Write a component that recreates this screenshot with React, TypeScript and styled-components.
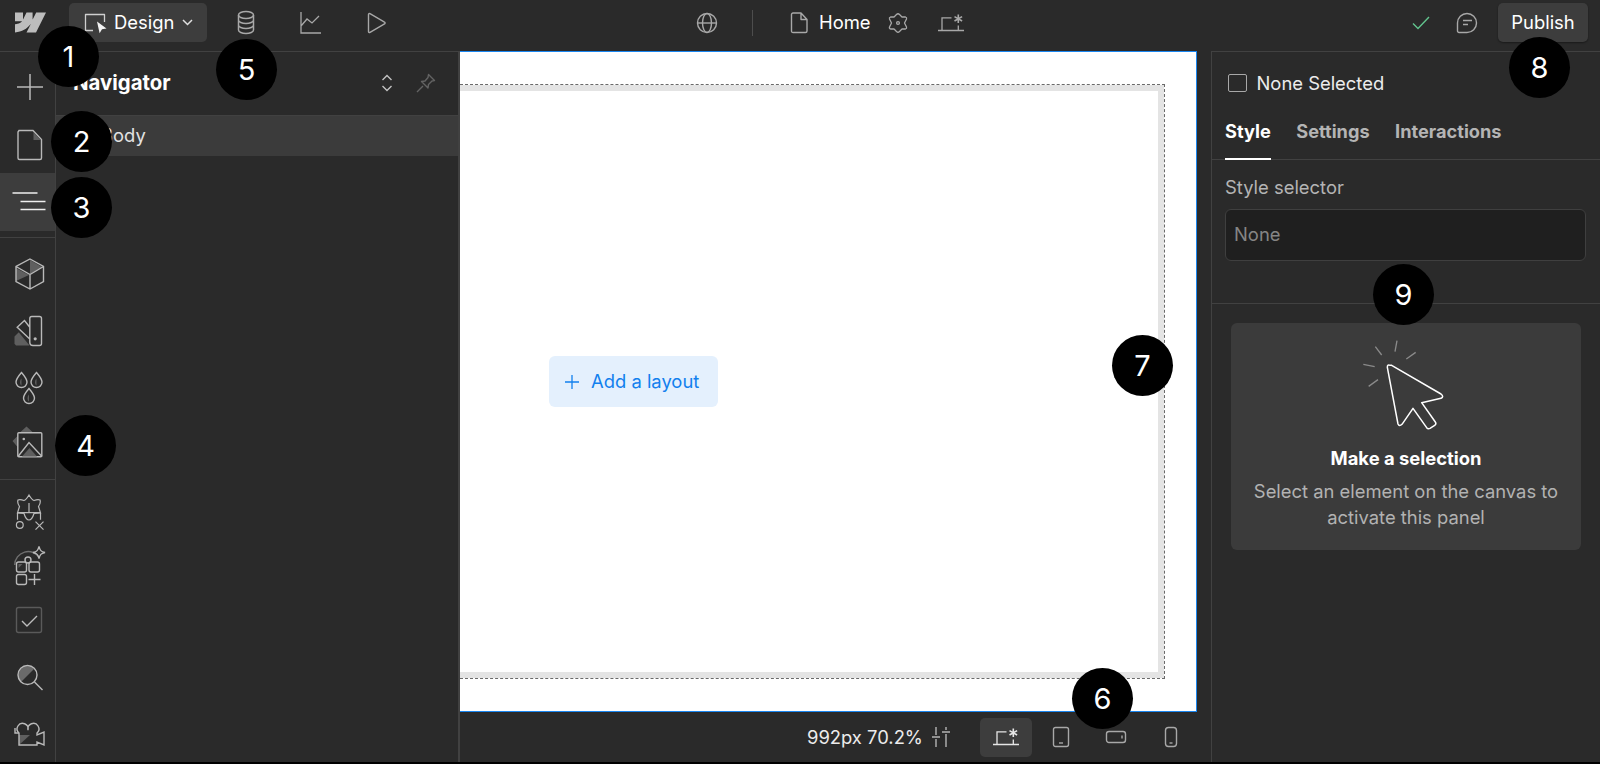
import React from "react";
import styled, { createGlobalStyle } from "styled-components";

const Global = createGlobalStyle`
  html, body { margin: 0; padding: 0; background: #000; height: 100%; overflow: hidden; }
  body { font-family: Inter, "Noto Sans", sans-serif; color: #fff; }
  svg { display: block; flex: none; overflow: visible; }
`;

const Shell = styled.div`
  position: relative;
  width: 1600px;
  height: 762px;
  background: #2a2a2a;
  display: flex;
  flex-direction: column;
  overflow: hidden;
  font-size: 18.4px;
`;

const TopBar = styled.header`
  height: 51px;
  flex: none;
  display: grid;
  grid-template-columns: 696px auto 1fr;
  align-items: center;
  box-sizing: border-box;
  padding-bottom: 6px;
  padding-right: 12px;
`;
const TopLeft = styled.div`
  display: flex;
  align-items: center;
`;
const LogoCell = styled.div`
  width: 69px;
  display: flex;
  padding-left: 15px;
  box-sizing: border-box;
`;
const ModeButton = styled.div`
  width: 138px;
  height: 39px;
  border-radius: 5px;
  background: #3d3d3d;
  display: flex;
  align-items: center;
  box-sizing: border-box;
  padding-left: 15px;
  gap: 6px;
`;
const ModeLabel = styled.span`
  margin-bottom: 2px;
`;
const ChevronSlot = styled.span`
  margin-left: 2px;
  display: flex;
`;
const ModeTabs = styled.div`
  display: flex;
  margin-left: 22px;
  gap: 31px;
`;
const TopCenter = styled.div`
  display: flex;
  align-items: center;
`;
const Spacer = styled.span<{ $w: number }>`
  width: ${(p) => p.$w}px;
  flex: none;
`;
const VRule = styled.div`
  width: 1px;
  height: 26px;
  background: #4d4d4d;
  margin: 0 37px 0 34px;
`;
const PageName = styled.span`
  margin: 0 16px 2px 11px;
`;
const TopRight = styled.div`
  display: flex;
  align-items: center;
  justify-content: flex-end;
`;
const PublishButton = styled.div`
  width: 90px;
  height: 39px;
  box-sizing: border-box;
  padding-bottom: 2px;
  border-radius: 5px;
  background: #3d3d3d;
  box-shadow: 0 1px 2px rgba(0, 0, 0, 0.4);
  display: flex;
  align-items: center;
  justify-content: center;
  margin-left: 20px;
`;
const Main = styled.div`
  flex: 1;
  min-height: 0;
  display: flex;
`;
const Sidebar = styled.nav`
  width: 56px;
  flex: none;
  box-sizing: border-box;
  border-right: 1px solid #414141;
  border-top: 1px solid #414141;
  display: flex;
  flex-direction: column;
`;
const SideGroup = styled.div<{ $pad: string; $last?: boolean; $grow?: boolean }>`
  padding: ${(p) => p.$pad};
  border-bottom: ${(p) => (p.$last ? "none" : "1px solid #414141")};
  flex: ${(p) => (p.$grow ? "1" : "none")};
  display: flex;
  flex-direction: column;
`;
const SideItem = styled.div<{ $active?: boolean; $h?: number }>`
  height: ${(p) => p.$h ?? 57}px;
  display: flex;
  align-items: center;
  justify-content: center;
  padding-left: 2px;
  background: ${(p) => (p.$active ? "#3d3d3d" : "transparent")};
`;
const Navigator = styled.section`
  width: 404px;
  flex: none;
  box-sizing: border-box;
  border-right: 2px solid #414141;
  border-top: 1px solid #414141;
  display: flex;
  flex-direction: column;
`;
const NavHead = styled.div`
  height: 64px;
  box-sizing: border-box;
  flex: none;
  display: flex;
  align-items: center;
  padding: 0 22px 2px 17px;
  border-bottom: 1px solid #414141;
`;
const NavTitle = styled.h2`
  flex: 1;
  margin: 0;
  font-size: 20.4px;
  font-weight: 700;
`;
const NavActions = styled.div`
  display: flex;
  align-items: center;
  gap: 23px;
`;
const NavRow = styled.div`
  height: 40px;
  box-sizing: border-box;
  background: #3b3b3b;
  display: flex;
  align-items: center;
  padding: 0 0 2px 45px;
  color: #e2e2e2;
`;
const Center = styled.div`
  flex: none;
  width: 751px;
  display: flex;
  flex-direction: column;
`;
const CanvasWrap = styled.div`
  flex: 1;
  display: flex;
  min-height: 0;
  padding-right: 14px;
`;
const Canvas = styled.div`
  flex: 1;
  background: #fff;
  box-sizing: border-box;
  border-top: 1.5px solid #1a86f0;
  border-right: 1.5px solid #1a86f0;
  border-bottom: 1.5px solid #1a86f0;
  padding: 32px 31px 32px 0;
  display: flex;
`;
const DashedFrame = styled.div`
  flex: 1;
  border: 1px dashed #6a6a6a;
  border-left: none;
  display: flex;
`;
const PageBody = styled.div`
  flex: 1;
  border: 6px solid #e4e4e4;
  border-left: none;
  display: flex;
  align-items: center;
  padding-left: 89px;
`;
const AddLayout = styled.div`
  width: 169px;
  height: 51px;
  box-sizing: border-box;
  border-radius: 6px;
  background: #e4f0fd;
  color: #1280ee;
  display: flex;
  align-items: center;
  padding-left: 16px;
  gap: 13px;
`;
const AddLabel = styled.span`
  margin-bottom: 2px;
  margin-left: -1px;
`;
const BottomBar = styled.div`
  height: 50px;
  flex: none;
  display: flex;
  align-items: center;
  padding-left: 347px;
  color: #ececec;
`;
const ZoomText = styled.span`
  white-space: pre;
  width: 124px;
`;
const DeviceButton = styled.div<{ $active?: boolean }>`
  width: 52px;
  height: 39px;
  border-radius: 5px;
  display: flex;
  align-items: center;
  justify-content: center;
  background: ${(p) => (p.$active ? "#3d3d3d" : "transparent")};
`;
const Devices = styled.div`
  display: flex;
  margin-left: 29px;
  gap: 3px;
`;
const Inspector = styled.aside`
  flex: 1;
  box-sizing: border-box;
  border-left: 1px solid #414141;
  border-top: 1px solid #414141;
  display: flex;
  flex-direction: column;
`;
const SelRow = styled.div`
  height: 61px;
  box-sizing: border-box;
  flex: none;
  display: flex;
  align-items: center;
  padding: 1px 0 0 16px;
  gap: 10px;
  color: #ececec;
`;
const CheckBox = styled.div`
  width: 16.5px;
  height: 16.5px;
  border: 1.5px solid #a8a8a8;
  border-radius: 2px;
`;
const Tabs = styled.div`
  height: 47px;
  flex: none;
  box-sizing: border-box;
  display: flex;
  padding-left: 13px;
  gap: 25.500px;
  border-bottom: 1px solid #414141;
`;
const Tab = styled.div<{ $active?: boolean }>`
  font-size: 18.2px;
  font-weight: 650;
  color: ${(p) => (p.$active ? "#fff" : "#b4b4b4")};
  height: 47px;
  box-sizing: border-box;
  padding-top: 7px;
  border-bottom: 2px solid ${(p) => (p.$active ? "#fff" : "transparent")};
`;
const StyleBlock = styled.div`
  flex: none;
  padding: 17px 14px 42px 13px;
  border-bottom: 1px solid #414141;
`;
const Label = styled.div`
  color: #b4b4b4;
  height: 32px;
  line-height: 21px;
`;
const Input = styled.div`
  height: 52px;
  box-sizing: border-box;
  border-radius: 6px;
  border: 1px solid #3f3f3f;
  background: #1f1f1f;
  color: #858585;
  display: flex;
  align-items: center;
  padding: 0 0 2px 8px;
`;
const EmptyCard = styled.div`
  margin: 19px 19px 0 19px;
  height: 227px;
  box-sizing: border-box;
  border-radius: 6px;
  background: #3b3b3b;
  display: flex;
  flex-direction: column;
  align-items: center;
  padding-top: 17px;
`;
const CardTitle = styled.div`
  font-weight: 700;
  margin-top: 15px;
  line-height: 26px;
`;
const CardText = styled.div`
  color: #b2b2b2;
  line-height: 26px;
  margin-top: 7px;
  text-align: center;
`;
const Marker = styled.div<{ $x: number; $y: number }>`
  position: absolute;
  left: ${(p) => p.$x}px;
  top: ${(p) => p.$y}px;
  width: 61px;
  height: 61px;
  border-radius: 50%;
  background: #000;
  color: #fff;
  font-size: 29px;
  display: flex;
  align-items: center;
  justify-content: center;
`;

const S = { stroke: "#b9b9b9", fill: "none", strokeWidth: 1.4 } as const;
const G = "#5f5f5f";

const Plus = () => (
  <svg width="40" height="40" viewBox="0 0 40 40" {...S} strokeWidth={1.5}>
    <path d="M8 19h26M21 6v26" />
  </svg>
);
const Page = () => (
  <svg width="40" height="40" viewBox="0 0 40 40" {...S}>
    <path d="M10 5.500h14l8.500 9v18.500a1.500 1.500 0 0 1-1.500 1.500H10.500A1.500 1.500 0 0 1 9 33V7z" />
    <path d="M24.500 7l7 8h-7z" fill={G} stroke="none" />
  </svg>
);
const Lines = () => (
  <svg width="40" height="40" viewBox="0 0 40 40" stroke="#eee" strokeWidth="1.3" fill="none">
    <path d="M3.500 11h25M11.500 19.500h25M11.500 27.500h25" />
  </svg>
);
const Cube = () => (
  <svg width="40" height="40" viewBox="0 0 40 40" {...S}>
    <path d="M21 20L21 6l12 7zM20 21l-13 -7v13z" fill={G} stroke="none" />
    <path d="M21 5l13.500 7.500v15L21 35 7 27.500v-15zM7 12.500l14 8 13.500-8M21 20.500V35" />
  </svg>
);
const Swatch = () => (
  <svg width="40" height="40" viewBox="0 0 40 40" {...S}>
    <path d="M5.500 32.800v-7.300l4.300-4.300L20.500 34.500H7z" fill={G} stroke="none" />
    <path d="M20.800 7.500a2 2 0 0 1 2-2H30.500a2 2 0 0 1 2 2v25a2 2 0 0 1-2 2H24a3.200 3.200 0 0 1-3.200-3.200zM20.800 16.200l-5.300-6.700-7.300 6.700 12.300 11.600" />
    <circle cx="26.200" cy="27.800" r="1.600" fill="#b9b9b9" stroke="none" />
  </svg>
);
const Drop = ({ x, y }: { x: number; y: number }) => (
  <g transform={`translate(${x} ${y})`}>
    <path d="M0 -2c-2 2-2 6 0 7z" fill={G} stroke="none" />
    <path d="M0 -8c3 3.500 5.500 6.500 5.500 9.500a5.500 5.500 0 0 1-11 0C-5.500 -1.500 -3 -4.500 0 -8z" />
  </g>
);
const Drops = () => (
  <svg width="40" height="40" viewBox="0 0 40 40" {...S}>
    <Drop x={12.5} y={12.5} />
    <Drop x={27.5} y={12.5} />
    <Drop x={20} y={28.5} />
  </svg>
);
const ImageIcon = () => (
  <svg width="40" height="40" viewBox="0 0 40 40" {...S}>
    <path d="M17.500 1.500l6 5.500H11.500zM3.500 16l5-5v11z" fill={G} stroke="none" />
    <rect x="8.800" y="7.800" width="24" height="24" rx="1" />
    <path d="M9 31.500l11-14 13 14" />
    <path d="M20.500 23l7.500 8.500H13z" fill={G} stroke="none" />
    <circle cx="14.800" cy="14" r="1.300" fill="#b9b9b9" stroke="none" />
  </svg>
);
const StarIcon = () => (
  <svg width="40" height="40" viewBox="0 0 40 40" {...S} strokeWidth={1.2}>
    <path d="M20 8Q23 13 25 13.500Q29 12 31 13Q32 16 29.500 19.500Q31 24 31.500 26Q27 26 25 26.500Q23 33 20 33Q17 33 15 26.500Q13 26 8.500 26Q9 24 10.500 19.500Q8 16 9 13Q11 12 15 13.500Q17 13 20 8Z" />
    <path d="M8.500 25.700H31.500M8.500 25.700v7M31.500 25.700v7M20 16v9" />
    <circle cx="10.800" cy="38" r="3.400" />
    <path d="M26.500 34.700l8 8M34.500 34.700l-8 8" />
  </svg>
);
const AppsIcon = () => (
  <svg width="40" height="40" viewBox="0 0 40 40" {...S}>
    <path d="M5.700 22a13.500 13.500 0 0 1 25-7" stroke="#707070" />
    <circle cx="19" cy="17" r="3" />
    <rect x="7.500" y="19" width="10" height="10" rx="2" />
    <path d="M9.500 21h4l-4 4z" fill={G} stroke="none" />
    <rect x="20" y="19" width="10.500" height="10" rx="2" />
    <rect x="7.500" y="31.500" width="10" height="10" rx="2" />
    <path d="M19.500 36.500h12M25.500 31v11" />
    <path d="M30 3.500c1 4 2 5 6 6-4 1-5 2-6 6-1-4-2-5-6-6 4-1 5-2 6-6z" />
  </svg>
);
const CheckIcon = () => (
  <svg width="40" height="40" viewBox="0 0 40 40" fill="none">
    <rect x="7.500" y="7.500" width="25" height="25" rx="2" stroke="#5a5a5a" strokeWidth="1.400" />
    <path d="M13 21l5 5 10-10" stroke="#bcbcbc" strokeWidth="1.400" />
  </svg>
);
const SearchIcon = () => (
  <svg width="40" height="40" viewBox="0 0 40 40" {...S}>
    <path d="M12 25a9 9 0 0 1 13-13z" fill="#6a6a6a" stroke="none" />
    <circle cx="18.500" cy="18" r="9.500" />
    <path d="M25.500 25l8 8" />
  </svg>
);
const VideoIcon = () => (
  <svg width="40" height="40" viewBox="0 0 40 40" {...S}>
    <path d="M10 21h11L10 31z" fill={G} stroke="none" />
    <path d="M10 31.500V19M10 19a5.500 5.500 0 1 1 9-3 5.500 5.500 0 1 1 9 3v2l7-3v13l-7-3v3H10z" />
    <path d="M6 14v5h4" />
  </svg>
);

const Logo = () => (
  <svg width="31" height="21" viewBox="0 0 31 21" fill="#bdbdbd">
    <path d="M31 0.500L21 20.500h-9.500l4.200-8.200h-.2C12.100 16.800 7 19.800 0 20.500v-8.100s4.500-.3 7.100-3.100H0V.6h8v6.600h.2L11.500.6h6.100v6.600h.2L21.200.5z" />
  </svg>
);
const DesignIcon = () => (
  <svg width="24" height="22" viewBox="0 0 24 22" fill="none">
    <path d="M9 18.500H1.500v-16h19V10" stroke="#cfcfcf" strokeWidth="1.300" strokeLinejoin="round" />
    <path d="M13 9.500l9.500 7-4.500.8-2.400 4z" fill="#f2f2f2" />
  </svg>
);
const Chevron = () => (
  <svg width="11" height="7" viewBox="0 0 11 7" fill="none" stroke="#e0e0e0" strokeWidth="1.500">
    <path d="M1 1l4.500 4.500L10 1" />
  </svg>
);
const Database = () => (
  <svg width="34" height="28" viewBox="0 0 34 28" {...S} stroke="#a8a8a8" strokeWidth="1.500">
    <ellipse cx="17" cy="6" rx="7.500" ry="3.500" />
    <path d="M9.500 6v15c0 2 3.500 3.500 7.500 3.500s7.500-1.500 7.500-3.500V6M9.500 11c0 2 3.500 3.500 7.500 3.500s7.500-1.500 7.500-3.500M9.500 16c0 2 3.500 3.500 7.500 3.500s7.500-1.500 7.500-3.500" />
  </svg>
);
const ChartIcon = () => (
  <svg width="34" height="28" viewBox="0 0 34 28" {...S} stroke="#a8a8a8" strokeWidth="1.300">
    <path d="M7 3v21h20M7 17l6-7 5 4 7-7" />
  </svg>
);
const PlayIcon = () => (
  <svg width="34" height="28" viewBox="0 0 34 28" {...S} stroke="#a8a8a8" strokeWidth="1.400">
    <path d="M9.500 5.500a1 1 0 0 1 1.500-.9l14.500 8.500a1 1 0 0 1 0 1.800L11 23.400a1 1 0 0 1-1.500-.9z" />
  </svg>
);
const Globe = () => (
  <svg width="22" height="22" viewBox="0 0 22 22" {...S} stroke="#a8a8a8" strokeWidth="1.400">
    <circle cx="11" cy="11" r="9.500" />
    <ellipse cx="11" cy="11" rx="4.500" ry="9.500" />
    <path d="M1.500 11h19" />
  </svg>
);
const PageSmall = () => (
  <svg width="18" height="21" viewBox="0 0 18 21" {...S} stroke="#a8a8a8" strokeWidth="1.400">
    <path d="M3 1h8l6 6.500v11.500a1.500 1.500 0 0 1-1.500 1.500h-12A1.500 1.500 0 0 1 1.500 19V2.500A1.500 1.500 0 0 1 3 1zM11 1v6.500h6" strokeLinejoin="round" />
  </svg>
);
const GearStar = () => (
  <svg width="22" height="22" viewBox="0 0 22 22" {...S} stroke="#a8a8a8" strokeWidth="1.300">
    <path d="M9.500 2.500Q11 1 12.500 2.500L15 5L18.500 5Q20 5.500 19.500 7L17.500 11L19.500 15Q20 16.500 18.500 17L15 17L12.500 19.500Q11 21 9.500 19.500L7 17L3.500 17Q2 16.500 2.500 15L4.500 11L2.500 7Q2 5.500 3.500 5L7 5Z" strokeLinejoin="round" />
    <circle cx="11" cy="11" r="1.400" />
  </svg>
);
const Desktop = ({ stroke = "#a8a8a8" }: { stroke?: string }) => (
  <svg width="28" height="20" viewBox="0 0 28 20" fill="none" stroke={stroke} strokeWidth="1.300">
    <path d="M1 17.500h26M5 17.500V4.800h9.500M21.300 12.500v5" />
    <path d="M21.300 1.500v8.600M17.500 3.600l7.600 4.400M25.100 3.600l-7.600 4.400" strokeWidth="1.600" />
  </svg>
);
const GreenCheck = () => (
  <svg width="18" height="14" viewBox="0 0 18 14" fill="none" stroke="#62c48e" strokeWidth="1.400">
    <path d="M1 7.500l5 5L17 1" />
  </svg>
);
const Comment = () => (
  <svg width="22" height="22" viewBox="0 0 22 22" {...S} stroke="#a8a8a8" strokeWidth="1.400">
    <path d="M1.500 11a9.500 9.500 0 1 1 9.500 9.500H3A1.500 1.500 0 0 1 1.500 19z" />
    <path d="M7 8.500h9M7 12.500h5" />
  </svg>
);
const Expand = () => (
  <svg width="12" height="18" viewBox="0 0 12 18" fill="none" stroke="#c2c2c2" strokeWidth="1.400">
    <path d="M1.500 6L6 1.500 10.500 6M1.500 12L6 16.500l4.500-4.500" />
  </svg>
);
const Pin = () => (
  <svg width="20" height="20" viewBox="0 0 20 20" fill="none" stroke="#636363" strokeWidth="1.400">
    <path d="M12.500 1.500l6 6-2.500.5-3.500 3.500-.5 3.500-6.500-6.500 3.500-.5L12 4.500zM7 13l-6 6" strokeLinejoin="round" />
  </svg>
);
const CursorArt = () => (
  <svg width="89.33" height="90" viewBox="484 90 268 270" fill="none">
    <path d="M527 110l19 25M592 92l-6 33M648 127l-28 20M491 163l34 7M535 209l-28 20" stroke="#8a8a8a" strokeWidth="4" />
    <path d="M576 166l148 86q10 8 0 13l-58 13 41 58q4 6-2 10l-14 9q-6 3-10-2l-41-58-33 48q-8 8-12-1l-32-170q0-10 9-6z" stroke="#fff" strokeWidth="4.500" strokeLinejoin="round" />
  </svg>
);
const Sliders = () => (
  <svg width="20" height="22" viewBox="0 0 20 22" fill="none" stroke="#b4b4b4" strokeWidth="1.400">
    <path d="M5 1v8M5 13v8M1 11h8M15 1v3M15 8v13M11 6h8" />
  </svg>
);
const Tablet = () => (
  <svg width="18" height="22" viewBox="0 0 18 22" {...S} stroke="#a8a8a8">
    <rect x="1.500" y="1.500" width="15" height="19" rx="2" />
    <path d="M7 17h4" />
  </svg>
);
const Landscape = () => (
  <svg width="22" height="16" viewBox="0 0 22 16" {...S} stroke="#a8a8a8">
    <rect x="1.500" y="2.500" width="19" height="11" rx="2.500" />
    <path d="M17 6.500v3" />
  </svg>
);
const Phone = () => (
  <svg width="16" height="22" viewBox="0 0 16 22" {...S} stroke="#a8a8a8">
    <rect x="2.500" y="1.500" width="11" height="19" rx="3" />
    <path d="M6.500 17h3" />
  </svg>
);
const SmallPlus = () => (
  <svg width="14" height="14" viewBox="0 0 14 14" fill="none" stroke="#1280ee" strokeWidth="1.300">
    <path d="M0 7h14M7 0v14" />
  </svg>
);

const markers = [
  { n: 1, x: 38, y: 26 },
  { n: 2, x: 51, y: 111 },
  { n: 3, x: 51, y: 177 },
  { n: 4, x: 55, y: 415 },
  { n: 5, x: 216, y: 39 },
  { n: 6, x: 1072, y: 668 },
  { n: 7, x: 1112, y: 335 },
  { n: 8, x: 1509, y: 37 },
  { n: 9, x: 1373, y: 264 },
];

export default function App() {
  return (
    <Shell>
      <Global />
      <TopBar>
        <TopLeft>
          <LogoCell>
            <Logo />
          </LogoCell>
          <ModeButton>
            <DesignIcon />
            <ModeLabel>Design</ModeLabel>
            <ChevronSlot>
              <Chevron />
            </ChevronSlot>
          </ModeButton>
          <ModeTabs>
            <Database />
            <ChartIcon />
            <PlayIcon />
          </ModeTabs>
        </TopLeft>
        <TopCenter>
          <Globe />
          <VRule />
          <PageSmall />
          <PageName>Home</PageName>
          <GearStar />
          <Spacer $w={28} />
          <Desktop />
        </TopCenter>
        <TopRight>
          <GreenCheck />
          <Spacer $w={26} />
          <Comment />
          <PublishButton>Publish</PublishButton>
        </TopRight>
      </TopBar>
      <Main>
        <Sidebar>
          <SideGroup $pad="7px 0 6px">
            <SideItem><Plus /></SideItem>
            <SideItem><Page /></SideItem>
            <SideItem $active $h={58}><Lines /></SideItem>
          </SideGroup>
          <SideGroup $pad="7px 0 6px">
            <SideItem><Cube /></SideItem>
            <SideItem><Swatch /></SideItem>
            <SideItem><Drops /></SideItem>
            <SideItem><ImageIcon /></SideItem>
          </SideGroup>
          <SideGroup $pad="0" $last $grow>
            <SideItem $h={54}><StarIcon /></SideItem>
            <SideItem><AppsIcon /></SideItem>
            <SideItem><CheckIcon /></SideItem>
            <SideItem><SearchIcon /></SideItem>
            <SideItem><VideoIcon /></SideItem>
          </SideGroup>
        </Sidebar>
        <Navigator>
          <NavHead>
            <NavTitle>Navigator</NavTitle>
            <NavActions>
              <Expand />
              <Pin />
            </NavActions>
          </NavHead>
          <NavRow>Body</NavRow>
        </Navigator>
        <Center>
          <CanvasWrap>
            <Canvas>
              <DashedFrame>
                <PageBody>
                  <AddLayout>
                    <SmallPlus />
                    <AddLabel>Add a layout</AddLabel>
                  </AddLayout>
                </PageBody>
              </DashedFrame>
            </Canvas>
          </CanvasWrap>
          <BottomBar>
            <ZoomText>992px 70.2%</ZoomText>
            <Sliders />
            <Devices>
              <DeviceButton $active><Desktop stroke="#e6e6e6" /></DeviceButton>
              <DeviceButton><Tablet /></DeviceButton>
              <DeviceButton><Landscape /></DeviceButton>
              <DeviceButton><Phone /></DeviceButton>
            </Devices>
          </BottomBar>
        </Center>
        <Inspector>
          <SelRow>
            <CheckBox />
            None Selected
          </SelRow>
          <Tabs>
            <Tab $active>Style</Tab>
            <Tab>Settings</Tab>
            <Tab>Interactions</Tab>
          </Tabs>
          <StyleBlock>
            <Label>Style selector</Label>
            <Input>None</Input>
          </StyleBlock>
          <EmptyCard>
            <CursorArt />
            <CardTitle>Make a selection</CardTitle>
            <CardText>
              Select an element on the canvas to
              <br />
              activate this panel
            </CardText>
          </EmptyCard>
        </Inspector>
      </Main>
      {markers.map((m) => (
        <Marker key={m.n} $x={m.x} $y={m.y}>{m.n}</Marker>
      ))}
    </Shell>
  );
}
